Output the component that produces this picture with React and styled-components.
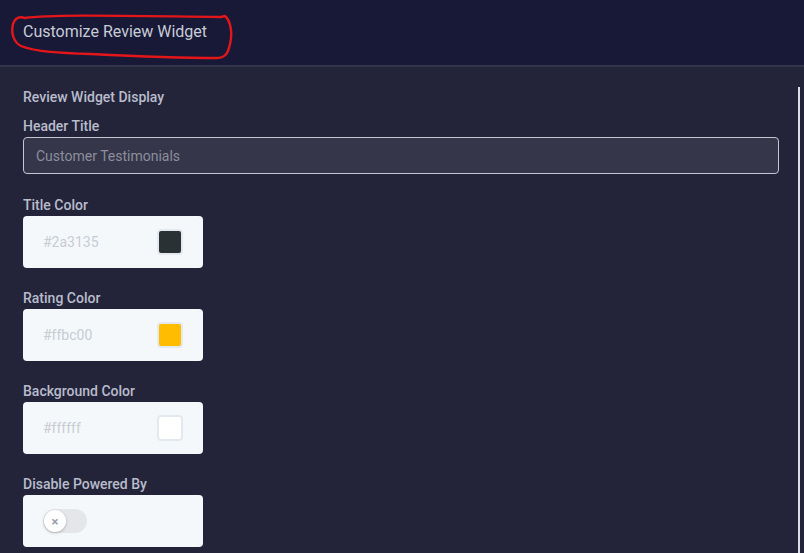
import styled, { createGlobalStyle } from "styled-components";

const Global = createGlobalStyle`
  html, body {
    margin: 0;
    padding: 0;
    background: #23243a;
    font-family: Roboto, "Liberation Sans", sans-serif;
  }
`;

const fields = [
  { label: "Title Color", value: "#2a3135", swatch: "#2a3135" },
  { label: "Rating Color", value: "#ffbc00", swatch: "#ffbc00" },
  { label: "Background Color", value: "#ffffff", swatch: "#ffffff" },
];

const App = () => {
  return <Page>
    <Global />
    <Header>
      <Title>Customize Review Widget</Title>
      <Scribble viewBox="0 0 222 48" width="222" height="48">
        <path
          d="M14 6 C40 2 120 4 210 5 L214 4 C219 8 222 20 219 32 C217 42 214 46 205 46 C170 46 120 44 80 42 C50 41 25 40 10 34 C2 30 0 20 2 12 C4 6 8 4 14 6 Z"
          fill="none"
          stroke="#e5161a"
          strokeWidth="2.4"
          strokeLinejoin="round"
        />
      </Scribble>
    </Header>

    <Body>
      <Section>Review Widget Display</Section>
      <Group $top="13px">
        <Label>Header Title</Label>
        <TextInput placeholder="Customer Testimonials" />
      </Group>

      {fields.map((f, i) => (
        <Group key={f.label} $top={i === 0 ? "23px" : "22px"}>
          <Label>{f.label}</Label>
          <ColorBox>
            <HexText>{f.value}</HexText>
            <Swatch $color={f.swatch} />
          </ColorBox>
        </Group>
      ))}

      <Group $top="22px">
        <Label>Disable Powered By</Label>
        <ColorBox>
          <Toggle>
            <Knob>×</Knob>
          </Toggle>
        </ColorBox>
      </Group>

      <ScrollLine />
    </Body>
  </Page>;
};

const Page = styled.div`
  width: 804px;
  height: 553px;
  overflow: hidden;
  background: #23243a;
`;

const Header = styled.header`
  position: relative;
  height: 67px;
  box-sizing: border-box;
  padding: 22px 23px 0;
  background: #171937;
  border-bottom: 2px solid #33344a;
`;

const Title = styled.h1`
  margin: 0;
  font-size: 16px;
  font-weight: 400;
  line-height: 20px;
  color: #c9ccd6;
`;

const Scribble = styled.svg`
  position: absolute;
  left: 11px;
  top: 12px;
`;

const Body = styled.main`
  position: relative;
  padding: 22px 25px 0 23px;
`;

const Section = styled.div`
  font-size: 14px;
  font-weight: 500;
  line-height: 16px;
  color: #b9bccb;
`;

const Group = styled.div`
  display: flex;
  flex-direction: column;
  gap: 3px;
  margin-top: ${({ $top }) => $top};
`;

const Label = styled.label`
  font-size: 14px;
  font-weight: 500;
  line-height: 16px;
  color: #b9bccb;
`;

const TextInput = styled.input`
  box-sizing: border-box;
  width: 756px;
  height: 37px;
  padding: 0 12px;
  border: 1px solid #c3c5d0;
  border-radius: 4px;
  background: #35364a;
  font-family: inherit;
  font-size: 14px;
  color: #d0d2dc;
  outline: none;
  &::placeholder {
    color: #8c8e9c;
  }
`;

const ColorBox = styled.div`
  box-sizing: border-box;
  width: 180px;
  height: 52px;
  display: flex;
  align-items: center;
  justify-content: space-between;
  padding: 0 20px 0 20px;
  background: #f4f8fb;
  border-radius: 4px;
`;

const HexText = styled.span`
  font-size: 14px;
  color: #c8ccd3;
`;

const Swatch = styled.span`
  box-sizing: border-box;
  width: 26px;
  height: 26px;
  border-radius: 4px;
  border: 2px solid #e4e9ef;
  background: ${({ $color }) => $color};
`;

const Toggle = styled.span`
  display: flex;
  align-items: center;
  width: 44px;
  height: 24px;
  border-radius: 12px;
  background: #e4e6ea;
`;

const Knob = styled.span`
  width: 22px;
  height: 22px;
  margin-left: 1px;
  border-radius: 50%;
  background: #ffffff;
  box-shadow: 0 1px 3px rgba(0, 0, 0, 0.25);
  display: flex;
  align-items: center;
  justify-content: center;
  font-size: 13px;
  font-weight: 700;
  line-height: 1;
  color: #9a9eaa;
`;

const ScrollLine = styled.span`
  position: absolute;
  left: 798px;
  top: 20px;
  width: 2px;
  height: 480px;
  background: #dcdde6;
`;

export default App;
